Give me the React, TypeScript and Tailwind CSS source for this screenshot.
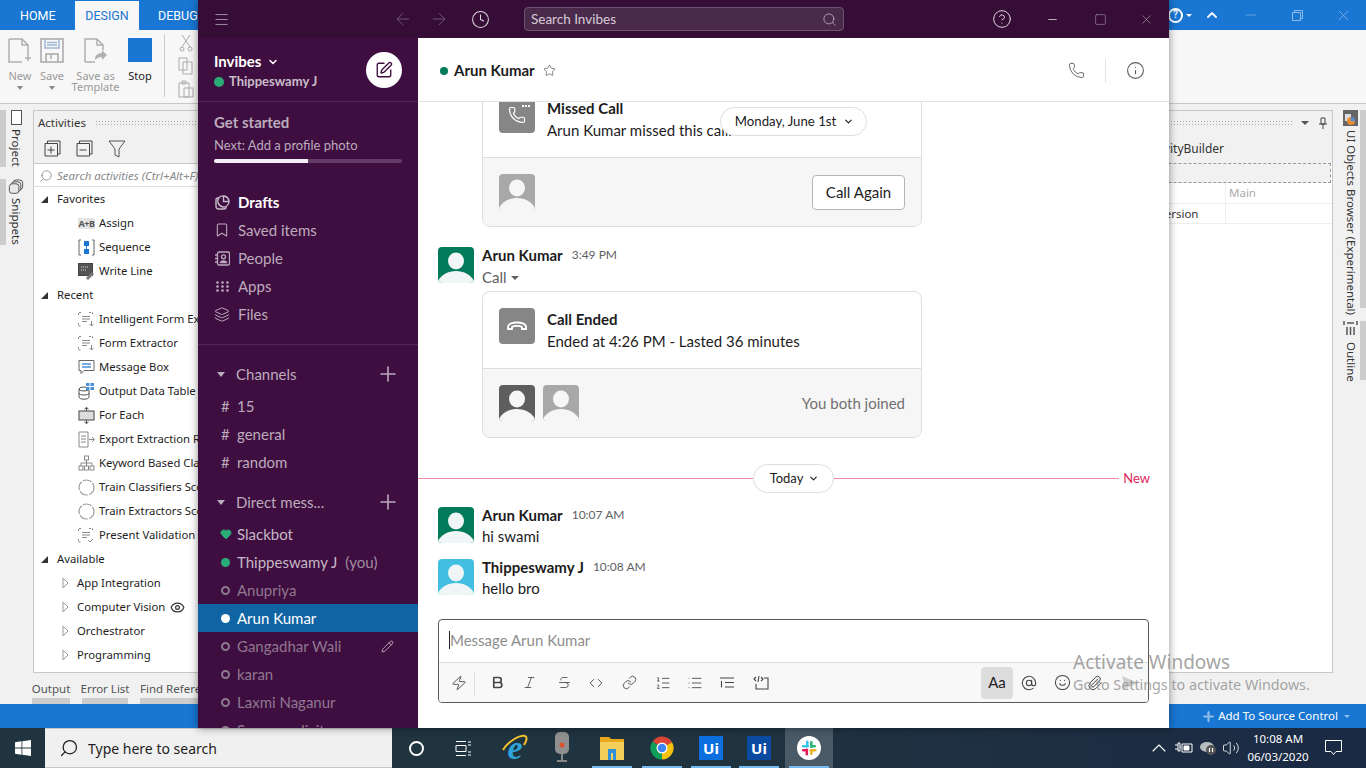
import React from "react";
import { Menu, ArrowLeft, ArrowRight, Clock, Search, CircleHelp, Minus, Square, X, Star, Phone, Info, ChevronDown, Plus, Heart, Pencil, SquarePen, Bookmark, Layers, Bold, Italic, Strikethrough, Code, Link, ListOrdered, List, AtSign, Smile, Paperclip, Zap, Eye, ChevronUp, Volume2 } from "lucide-react";

const Avatar = ({ bg, fg, cls = "" }: { bg: string; fg: string; cls?: string }) => (
  <svg width="36" height="36" viewBox="0 0 36 36" className={"shrink-0 rounded " + cls}>
    <rect width="36" height="36" fill={bg} />
    <ellipse cx="18" cy="14" rx="8" ry="8.5" fill={fg} />
    <path d="M0 36v-2C3 28 10 24 18 24s15 4 18 10v2z" fill={fg} />
  </svg>
);

const Tri = () => <span className="block w-0 h-0 border-l-[7px] border-l-transparent border-b-[7px] border-b-[#333]" />;
const OpenTri = () => (
  <svg width="7" height="12" viewBox="0 0 7 12"><path d="M1 1l5 5-5 5z" fill="#fff" stroke="#999" /></svg>
);

const G = "#8a8a8a";
const ExtractIcon = ({ check }: { check?: boolean }) => (
  <svg width="17" height="17" viewBox="0 0 17 17" fill="none" stroke={G}>
    <path d="M.5 4V1.5h3M11 1.5h3.5V4M.5 12v3h3" strokeDasharray="2 1" />
    <path d="M4 5.5h8M4 8h8M4 10.500h5" />
    {check ? <path d="M10 13l2 2 3-3" /> : <path d="M13.500 10v5M11.500 13l2 2 2-2" />}
  </svg>
);
const TreeIcons: Record<string, React.ReactNode> = {
  assign: <span className="text-[9px] font-bold text-[#555] bg-[#e4e4e4] px-px leading-[11px] tracking-[-0.5px]">A+B</span>,
  seq: (
    <svg width="17" height="17" viewBox="0 0 17 17" fill="none">
      <path d="M3 1H1v15h2M14 1h2v15h-2" stroke="#666" />
      <rect x="6" y="2" width="5" height="5" fill="#1976d2" /><rect x="6" y="10" width="5" height="5" fill="#1976d2" />
      <path d="M8.500 7v3" stroke="#1976d2" />
    </svg>
  ),
  write: (
    <svg width="17" height="17" viewBox="0 0 17 17" fill="none">
      <rect x=".5" y=".5" width="14" height="12" fill="#555" stroke="#444" />
      <path d="M3 4h8M3 7h6" stroke="#ddd" strokeDasharray="1 1" />
      <path d="M8 15l6-6 2 2-6 6z" fill="#777" />
    </svg>
  ),
  extract: <ExtractIcon />,
  present: <ExtractIcon check />,
  msg: (
    <svg width="17" height="17" viewBox="0 0 17 17" fill="none">
      <path d="M1 1.500h15v10H6l-3 3v-3H1z" stroke="#666" />
      <path d="M4 5h9M4 8h9" stroke="#4a90d9" strokeWidth="1.500" />
    </svg>
  ),
  table: (
    <svg width="17" height="17" viewBox="0 0 17 17" fill="none">
      <ellipse cx="6" cy="6" rx="5" ry="2" stroke="#555" />
      <path d="M1 6v8c0 1.300 2 2.200 5 2.200s5-.9 5-2.200V6M1 10c0 1.300 2 2 5 2s5-.7 5-2" stroke="#555" />
      <rect x="8" y="0" width="8" height="7" fill="#4a90d9" />
      <path d="M8 3.500h8M12 0v7" stroke="#fff" />
    </svg>
  ),
  foreach: (
    <svg width="17" height="17" viewBox="0 0 17 17" fill="none">
      <rect x="1" y="4" width="15" height="9" fill="#ddd" stroke="#444" />
      <path d="M8.500 1v3M8.500 13v3M6.500 2l2-1.500 2 1.500M6.500 15l2 1.500 2-1.500" stroke="#444" />
    </svg>
  ),
  exportx: (
    <svg width="17" height="17" viewBox="0 0 17 17" fill="none" stroke={G}>
      <path d="M1 1h9v15H1zM3 5h5M3 8h5M3 11h5" />
      <path d="M11 8.500h5M14 6l2.500 2.500L14 11" />
    </svg>
  ),
  keyword: (
    <svg width="17" height="17" viewBox="0 0 17 17" fill="none" stroke={G}>
      <rect x="6.500" y="1" width="4" height="4" /><rect x="1" y="11" width="4" height="4" /><rect x="6.500" y="11" width="4" height="4" /><rect x="12" y="11" width="4" height="4" />
      <path d="M8.500 5v6M3 11V8h11v3" />
    </svg>
  ),
  train: (
    <svg width="17" height="17" viewBox="0 0 17 17" fill="none"><circle cx="8.500" cy="8.500" r="7.500" stroke="#999" strokeWidth="1.200" strokeDasharray="9 1.500" /></svg>
  ),
};

const treeFont = "[font-family:'Noto_Sans',sans-serif] text-[11.3px] text-[#1e1e1e]";

const Cat = ({ label }: { label: string }) => (
  <div className="h-6 flex items-center">
    <span className="w-[23px] pl-[7px] flex"><Tri /></span>
    <span>{label}</span>
  </div>
);
const Item = ({ icon, label }: { icon: string; label: string }) => (
  <div className="h-6 flex items-center whitespace-nowrap">
    <span className="w-[17px] h-[17px] ml-[44px] mr-[4px] flex items-center justify-center shrink-0">{TreeIcons[icon]}</span>
    <span>{label}</span>
  </div>
);
const Group = ({ label, eye }: { label: string; eye?: boolean }) => (
  <div className="h-6 flex items-center whitespace-nowrap">
    <span className="ml-[28px] w-[15px] flex shrink-0"><OpenTri /></span>
    <span>{label}</span>
    {eye && <Eye size={15} className="ml-[5px] text-[#333]" />}
  </div>
);

const NavRow = ({ icon, label, active }: { icon: React.ReactNode; label: string; active?: boolean }) => (
  <div className="h-7 flex items-center pl-4">
    <span className={"w-[16px] mr-[8px] flex justify-center " + (active ? "text-[#c9bcca]" : "text-[#bcabbc]")}>{icon}</span>
    <span className={active ? "font-bold text-white" : "text-[#bcabbc]"}>{label}</span>
  </div>
);

const Hash = ({ label }: { label: string }) => (
  <div className="h-7 flex items-center pl-[23px] text-[#bcabbc]">
    <span className="w-[16px]">#</span><span>{label}</span>
  </div>
);
const OffDot = () => <span className="w-[9px] h-[9px] rounded-full border-2 border-[#8d7a8e] ml-[23px] mr-[7px]" />;
const Dm = ({ label, children }: { label: string; children?: React.ReactNode }) => (
  <div className="h-7 flex items-center text-[#8f7790]">
    <OffDot /><span>{label}</span>{children}
  </div>
);

const SectionHead = ({ label }: { label: string }) => (
  <div className="h-7 flex items-center text-[#bcabbc] pl-[19px] pr-[18px]">
    <span className="w-0 h-0 border-x-[4.500px] border-x-transparent border-t-[5px] border-t-[#bcabbc] mr-[11px]" />
    <span className="flex-1">{label}</span>
    <Plus size={24} strokeWidth={1.600} />
  </div>
);

const CallCard = ({ icon, title, sub, footer, avatars }: { icon: React.ReactNode; title: string; sub: string; footer: React.ReactNode; avatars: React.ReactNode }) => (
  <div className="w-[440px] h-[147px] border border-[#dddddd] rounded-lg flex flex-col overflow-hidden">
    <div className="h-[77px] shrink-0 pl-4 pt-4 flex gap-3 border-b border-[#dddddd]">
      <div className="w-9 h-9 rounded bg-[#868686] flex items-center justify-center text-white shrink-0">{icon}</div>
      <div>
        <div className="h-[22px] leading-[22px] font-bold text-[15px] text-[#1d1c1d]">{title}</div>
        <div className="h-[22px] leading-[22px] text-[15px] text-[#1d1c1d]">{sub}</div>
      </div>
    </div>
    <div className="flex-1 bg-[#f6f6f6] flex items-center justify-between pl-4 pr-4">
      <div className="flex gap-2">{avatars}</div>
      {footer}
    </div>
  </div>
);

const NameLine = ({ name, time }: { name: string; time: string }) => (
  <div className="h-[16px] mb-[2px] flex items-center gap-[9px]">
    <span className="font-bold text-[15px] text-[#1d1c1d]">{name}</span>
    <span className="text-[12px] text-[#616061]">{time}</span>
  </div>
);

const Msg = ({ bg, name, time, text, cls = "" }: { bg: string; name: string; time: string; text: React.ReactNode; cls?: string }) => (
  <div className={"flex gap-2 pl-5 " + cls}>
    <Avatar bg={bg} fg="#eff6f5" />
    <div>
      <NameLine name={name} time={time} />
      <div className="h-[22px] leading-[22px] text-[15px] text-[#1d1c1d]">{text}</div>
    </div>
  </div>
);

const Tb = ({ children, cls = "" }: { children: React.ReactNode; cls?: string }) => (
  <span className={"flex items-center justify-center text-[#444] " + cls}>{children}</span>
);

const Underline = () => <span className="absolute bottom-0 left-1/2 -translate-x-1/2 w-[40px] h-[2px] bg-[#76b9ed]" />;

const SlackLogo = () => (
  <svg width="24" height="24" viewBox="0 0 24 24">
    <circle cx="12" cy="12" r="12" fill="#fff" />
    <rect x="5" y="9" width="7" height="2.600" rx="1.300" fill="#36c5f0" />
    <rect x="9" y="4.500" width="2.600" height="6" rx="1.300" fill="#36c5f0" />
    <rect x="13" y="5" width="2.600" height="7" rx="1.300" fill="#2eb67d" />
    <rect x="13" y="9" width="6" height="2.600" rx="1.300" fill="#2eb67d" />
    <rect x="12.500" y="13" width="7" height="2.600" rx="1.300" fill="#ecb22e" />
    <rect x="13" y="13" width="2.600" height="6" rx="1.300" fill="#ecb22e" />
    <rect x="8.500" y="12.500" width="2.600" height="7" rx="1.300" fill="#e01e5a" />
    <rect x="5" y="13" width="6" height="2.600" rx="1.300" fill="#e01e5a" />
  </svg>
);

export default function App() {
  return (
    <div className="w-[1366px] h-[768px] relative overflow-hidden flex flex-col bg-[#f1f1f1] [font-family:'Noto_Sans',sans-serif]">
      {/* ---------- UiPath Studio behind ---------- */}
      <div className="h-[30px] bg-[#1976d2] flex text-[12.500px] text-white shrink-0 items-end [font-family:Roboto,sans-serif]">
        <span className="w-[75px] h-[30px] pt-[7px] pl-[20px]">HOME</span>
        <span className="w-[64px] h-[29px] bg-[#f7f7f7] text-[#1976d2] pt-[6px] text-center">DESIGN</span>
        <span className="w-[60px] h-[30px] pt-[7px] pl-[19px]">DEBUG</span>
        <span className="flex-1" />
        <span className="flex items-center h-[30px] w-[198px] text-white/90">
          <span className="w-[15px] h-[15px] shrink-0 rounded-full border-2 border-white text-[10px] font-bold flex items-center justify-center leading-none">?</span>
          <span className="ml-[3px] w-0 h-0 border-x-[3px] border-x-transparent border-t-[3px] border-t-white" />
          <ChevronUp size={16} strokeWidth={3} className="ml-[12px]" />
          <Minus size={16} strokeWidth={1} className="ml-[23px] text-[#8fbde9]" />
          <span className="w-[16px] h-[16px] ml-[30px] flex items-center justify-center">
            <svg width="11" height="11" viewBox="0 0 11 11" fill="none" stroke="#8fbde9"><path d="M.5 2.500h8v8h-8zM2.500 2.500v-2h8v8h-2" /></svg>
          </span>
          <X size={17} strokeWidth={1} className="ml-[30px] text-[#8fbde9]" />
        </span>
      </div>
      <div className="h-[74px] shrink-0 bg-[#f7f7f7] border-b border-[#c8c8c8] flex text-[11px] text-[#9a9a9a] leading-[11px]">
        <div className="w-[40px] pt-[8px] flex flex-col items-center">
          <svg width="24" height="25" viewBox="0 0 24 25" fill="none" stroke="#b0b0b0" strokeWidth="1.500"><path d="M1 1h13l6 6v10M20 17M1 1v23h13M14 1v6h6" /><path d="M17 20h6M20 17v6" /></svg>
          <span className="mt-[7px]">New</span>
          <span className="mt-[5px] w-0 h-0 border-x-[3.500px] border-x-transparent border-t-[4px] border-t-[#888]" />
        </div>
        <div className="w-[24px] pt-[8px] flex flex-col items-center">
          <svg width="24" height="25" viewBox="0 0 24 25" fill="none" stroke="#a8a8a8" strokeWidth="1.500"><path d="M1 1h22v23H1z" /><path d="M5 1v9h14V1M7 4.500h10M7 7h10" stroke="#a0b8d8" /><path d="M6 24v-8h12v8M11 17v4" /></svg>
          <span className="mt-[7px]">Save</span>
          <span className="mt-[5px] w-0 h-0 border-x-[3.500px] border-x-transparent border-t-[4px] border-t-[#888]" />
        </div>
        <div className="w-[57px] pt-[8px] flex flex-col items-center ml-[3px]">
          <svg width="24" height="25" viewBox="0 0 24 25" fill="none" stroke="#b0b0b0" strokeWidth="1.500"><path d="M1 24V1h12l6 6v5M1 24h10M13 1v6h6" /><path d="M11 22c0-5 3-7 7-7v-3l5 5-5 5v-3c-3 0-5 1-7 3z" fill="#b0b0b0" stroke="none" /></svg>
          <span className="mt-[7px]">Save as</span>
          <span>Template</span>
        </div>
        <div className="w-[24px] pt-[8px] flex flex-col items-center ml-[4px]">
          <span className="w-[24px] h-[24px] bg-[#1976d2]" />
          <span className="mt-[8px] text-[#222]">Stop</span>
        </div>
        <span className="w-px h-[63px] bg-[#ccc] mt-[4px] ml-[12px]" />
        <div className="flex flex-col pt-[4px] pl-[13px] gap-[5px]">
          <svg width="16" height="18" viewBox="0 0 16 18" fill="none" stroke="#aaa"><path d="M4 1l8 12M12 1L4 13" /><circle cx="4" cy="15" r="2" /><circle cx="12" cy="15" r="2" /></svg>
          <svg width="16" height="18" viewBox="0 0 16 18" fill="none" stroke="#aaa"><path d="M1 1h8v12H1zM5 5h9v12H5z" fill="#f7f7f7" /></svg>
          <svg width="16" height="18" viewBox="0 0 16 18" fill="none" stroke="#aaa"><path d="M1 3h10v14H1zM4 1h4v3H4zM6 8h9v9H6z" fill="#f7f7f7" /></svg>
        </div>
      </div>

      <div className="flex-1 flex min-h-0">
        {/* left strip */}
        <div className="w-[33px] shrink-0 flex flex-col pt-[6px] text-[11.500px] text-[#333]">
          <div className="flex h-[57px]">
            <span className="w-[6px] bg-[#cccccc]" />
            <div className="flex flex-col items-center w-[20px]">
              <span className="w-[11px] h-[15px] border border-[#555] bg-white" />
              <span className="[writing-mode:vertical-rl] mt-[4px] leading-[14px]">Project</span>
            </div>
          </div>
          <div className="flex h-[66px] mt-[12px]">
            <span className="w-[6px] bg-[#cccccc]" />
            <div className="flex flex-col items-center w-[20px]">
              <svg width="16" height="16" viewBox="0 0 16 16" fill="#e8e8e8" stroke="#555"><rect x="5" y="1" width="10" height="10" rx="3" /><rect x="3" y="3" width="10" height="10" rx="3" /><rect x="1" y="5" width="10" height="10" rx="3" /></svg>
              <span className="[writing-mode:vertical-rl] mt-[4px] leading-[14px]">Snippets</span>
            </div>
          </div>
        </div>

        {/* activities */}
        <div className="shrink-0 w-[300px] flex flex-col">
          <div className="mt-[6px] h-[563px] bg-white border border-[#c8c8c8] flex flex-col overflow-hidden">
            <div className="h-[23px] bg-[#f1f1f1] flex items-center pl-[4px] text-[11.500px] text-[#333] shrink-0">
              Activities
              <span className="ml-[9px] flex-1 h-[5px] mr-[6px] bg-[radial-gradient(#aaa_1px,transparent_1px)] [background-size:3px_3px]" />
            </div>
            <div className="h-[30px] bg-[#f1f1f1] border-b border-[#c8c8c8] flex items-center pl-[10px] shrink-0">
              <svg width="17" height="17" viewBox="0 0 17 17" fill="none" stroke="#444"><path d="M3.500 3V1H16v13h-2" /><path d="M1 3.500h12.500V16H1zM7 6.500v7M3.500 10h7" /></svg>
              <svg width="17" height="17" viewBox="0 0 17 17" fill="none" stroke="#444" className="ml-[15px]"><path d="M3.500 3V1H16v13h-2" /><path d="M1 3.500h12.500V16H1zM3.500 10h7" /></svg>
              <svg width="18" height="18" viewBox="0 0 18 18" fill="none" stroke="#555" className="ml-[15px]"><path d="M1 1h16l-6 8v8l-4-2V9z" /></svg>
            </div>
            <div className="h-[23px] border-b border-[#dedede] flex items-center pl-[5px] pt-[2px] shrink-0 text-[11.500px] italic text-[#8a8a8a] whitespace-nowrap">
              <Search size={14} strokeWidth={1.500} className="mr-[4px] -scale-x-100" />
              Search activities (Ctrl+Alt+F)
            </div>
            <div className={treeFont}>
              <Cat label="Favorites" />
              <Item icon="assign" label="Assign" />
              <Item icon="seq" label="Sequence" />
              <Item icon="write" label="Write Line" />
              <Cat label="Recent" />
              <Item icon="extract" label="Intelligent Form Extractor" />
              <Item icon="extract" label="Form Extractor" />
              <Item icon="msg" label="Message Box" />
              <Item icon="table" label="Output Data Table" />
              <Item icon="foreach" label="For Each" />
              <Item icon="exportx" label="Export Extraction Results" />
              <Item icon="keyword" label="Keyword Based Classifier" />
              <Item icon="train" label="Train Classifiers Scope" />
              <Item icon="train" label="Train Extractors Scope" />
              <Item icon="present" label="Present Validation Station" />
              <Cat label="Available" />
              <Group label="App Integration" />
              <Group label="Computer Vision" eye />
              <Group label="Orchestrator" />
              <Group label="Programming" />
            </div>
          </div>
          <div className="flex-1 flex text-[11.500px] text-[#555] whitespace-nowrap">
            <div className="w-[38px] flex flex-col justify-between items-center pt-[7px] -ml-px"><span>Output</span><span className="w-full h-[6px] bg-[#cccccc]" /></div>
            <div className="w-[46px] ml-[12px] flex flex-col justify-between items-center pt-[7px]"><span>Error List</span><span className="w-full h-[6px] bg-[#cccccc]" /></div>
            <div className="w-[100px] ml-[12px] flex flex-col justify-between pt-[7px]"><span>Find References</span><span className="w-full h-[6px] bg-[#cccccc]" /></div>
          </div>
        </div>

        <div className="flex-1" />

        {/* right panel */}
        <div className="w-[300px] shrink-0 mt-[6px] h-[563px] bg-white border border-[#c8c8c8] flex flex-col text-[11.500px] text-[#333]">
          <div className="h-[23px] bg-[#f1f1f1] flex items-center shrink-0 justify-end pr-[5px]">
            <span className="flex-1 ml-[10px] h-[5px] mr-[8px] bg-[radial-gradient(#aaa_1px,transparent_1px)] [background-size:3px_3px]" />
            <span className="w-0 h-0 border-x-[4px] border-x-transparent border-t-[4px] border-t-[#555] mr-[10px]" />
            <svg width="8" height="12" viewBox="0 0 8 12" fill="none" stroke="#444"><path d="M2 1h4v6H2zM0 7h8M4 7v5" /></svg>
          </div>
          <div className="h-[29px] bg-[#f1f1f1] flex items-center pl-[109px] shrink-0 text-[12px]">ActivityBuilder</div>
          <div className="h-[20px] bg-[#f1f1f1] border border-dashed border-[#999] mr-px shrink-0" />
          <div className="h-[21px] flex border-b border-[#eee] shrink-0">
            <span className="w-[192px] border-r border-[#eee]" /><span className="pl-[3px] text-[#aaa] leading-[20px]">Main</span>
          </div>
          <div className="h-[20px] flex border-b border-[#eee] shrink-0">
            <span className="w-[192px] border-r border-[#eee] pl-[124px] leading-[20px]">Version</span>
          </div>
        </div>

        {/* right strip */}
        <div className="w-[33px] shrink-0 flex flex-col pt-[6px] text-[11.500px] text-[#333]">
          <div className="flex h-[198px]">
            <div className="flex flex-col items-center w-[27px] pl-[8px]">
              <svg width="15" height="16" viewBox="0 0 15 16" className="shrink-0"><rect width="15" height="16" fill="#666" /><rect x="2" y="4" width="6" height="7" fill="#ddd" /><circle cx="8" cy="11" r="4" fill="#e58b3a" /><path d="M8 11V7a4 4 0 014 4z" fill="#4a90d9" /></svg>
              <span className="[writing-mode:vertical-rl] mt-[4px] leading-[14px] whitespace-nowrap">UI Objects Browser (Experimental)</span>
            </div>
            <span className="w-[6px] bg-[#cccccc]" />
          </div>
          <div className="flex h-[59px] mt-[13px]">
            <div className="flex flex-col items-center w-[27px] pl-[8px]">
              <svg width="15" height="14" viewBox="0 0 15 14" fill="none" stroke="#555" strokeWidth="1.500" className="shrink-0"><path d="M1 0v4M14 0v4M4 2h7M4 6v8M7.500 6v8M11 6v8" /></svg>
              <span className="[writing-mode:vertical-rl] mt-[7px] leading-[14px]">Outline</span>
            </div>
            <span className="w-[6px] bg-[#cccccc]" />
          </div>
        </div>
      </div>

      <div className="h-[24px] shrink-0 bg-[#1976d2] flex items-center justify-end text-[11.500px] text-white pr-[16px]">
        <Plus size={15} strokeWidth={3.500} className="text-[#8fbde9] mr-[2px]" />
        Add To Source Control
        <span className="ml-[6px] w-0 h-0 border-x-[3px] border-x-transparent border-t-[3px] border-t-[#8fbde9]" />
      </div>

      {/* ---------- Taskbar ---------- */}
      <div className="h-[40px] shrink-0 bg-[linear-gradient(90deg,#20343f,#20343f_50%,#1a2a45)] flex items-center text-white relative">
        <span className="w-[45px] flex justify-center">
          <svg width="16" height="16" viewBox="0 0 16 16" fill="#fff"><path d="M0 2.200l6.500-.9v6.300H0zM7.300 1.200L16 0v7.600H7.300zM0 8.400h6.500v6.300L0 13.800zM7.300 8.400H16V16l-8.700-1.200z" /></svg>
        </span>
        <div className="w-[347px] h-[40px] bg-[#f0f0f0] border-y border-[#c8c8c8] flex items-center pl-[14px] text-[#1e1e1e] text-[14px]">
          <Search size={20} strokeWidth={1.500} className="-scale-x-100 mr-[9px]" />
          Type here to search
        </div>
        <span className="w-[48px] flex justify-center"><span className="w-[15px] h-[15px] rounded-full border-2 border-white" /></span>
        <span className="w-[46px] flex justify-center">
          <svg width="17" height="17" viewBox="0 0 17 17" fill="none" stroke="#fff"><path d="M1 5.500h10v6H1zM1 1.500h10M1 15.500h10M13 2h3M13 5h3M13 12h3M13 15h3" /></svg>
        </span>
        <span className="w-[58px] flex justify-center relative">
          <span className="text-[34px] leading-[34px] italic font-bold text-[#2ea3dc] [font-family:'Liberation_Serif',serif]">e</span>
          <svg width="30" height="24" viewBox="0 0 30 24" fill="none" className="absolute top-[3px] left-[14px]"><path d="M3 16C8 7 20 1 25 2c3 1 1 6-1 9" stroke="#f2c230" strokeWidth="2" /></svg>
        </span>
        <span className="w-[36px] flex justify-center">
          <svg width="14" height="32" viewBox="0 0 14 32"><rect width="14" height="22" rx="5" fill="#8f8f8f" /><circle cx="7" cy="13" r="2.500" fill="#d9552a" /><path d="M6 22h2v6h4v2H2v-2h4z" fill="#888" /></svg>
        </span>
        <span className="w-[64px] h-[40px] flex items-center justify-center relative">
          <svg width="24" height="26" viewBox="0 0 24 26"><path d="M0 2h9l2 2h13v4H0z" fill="#e8a81c" /><path d="M0 7h24v18H0z" fill="#f5cf5c" /><path d="M8 14h8v11H8z" fill="#2f8fd8" /><path d="M11 18h2v7h-2z" fill="#f5cf5c" /></svg>
          <Underline />
        </span>
        <span className="w-[36px] h-[40px] flex items-center justify-center relative">
          <svg width="24" height="24" viewBox="0 0 24 24" className="shrink-0">
            <path d="M12 12L2.500 5.600A11.500 11.500 0 0122 6.200z" fill="#db4437" />
            <path d="M12 12l10-5.800A11.500 11.500 0 0112 23.500z" fill="#f4c20d" />
            <path d="M12 12v11.500A11.500 11.500 0 012.500 5.600z" fill="#0f9d58" />
            <circle cx="12" cy="12" r="5.500" fill="#fff" /><circle cx="12" cy="12" r="4.300" fill="#4285f4" />
          </svg>
          <Underline />
        </span>
        <span className="w-[62px] h-[40px] flex items-center justify-center relative">
          <span className="w-[24px] h-[24px] bg-[#0b6fe0] flex items-center justify-center text-[15px] font-bold">Ui</span>
          <Underline />
        </span>
        <span className="w-[34px] h-[40px] flex items-center justify-center relative">
          <span className="w-[24px] h-[24px] bg-[#0a4aa0] flex items-center justify-center text-[15px] font-bold">Ui</span>
          <Underline />
        </span>
        <span className="w-[48px] h-[40px] ml-[9px] flex items-center justify-center relative bg-[#4a5a66]">
          <SlackLogo />
          <Underline />
        </span>
        <span className="flex-1" />
        <ChevronUp size={24} strokeWidth={1.100} className="mr-[4px]" />
        <svg width="18" height="12" viewBox="0 0 18 12" fill="none" stroke="#fff" className="mr-[6px]"><path d="M0 3h3M0 7h3M3 1v8h2V1zM5 5h1M7 2h10v8H7z" /><path d="M9 4h5v4H9z" fill="#fff" /></svg>
        <svg width="18" height="14" viewBox="0 0 18 14" className="mr-[5px]"><ellipse cx="8" cy="6" rx="7" ry="5" fill="#b8bcc0" /><circle cx="12" cy="9" r="5" fill="#555" /><path d="M10.500 7v4M13.500 7v4" stroke="#fff" strokeWidth="1.200" /></svg>
        <Volume2 size={18} strokeWidth={1.100} className="mr-[13px]" />
        <span className="w-[50px] flex flex-col items-center text-[11.500px] leading-[18px] whitespace-nowrap">
          <span>10:08 AM</span><span>06/03/2020</span>
        </span>
        <svg width="17" height="16" viewBox="0 0 17 16" fill="none" stroke="#fff" className="ml-[22px] mr-[24px]"><path d="M.5.500h16v11H11l-2.500 3-2.500-3H.5z" /></svg>
      </div>

      {/* ---------- Slack window on the desktop ---------- */}
      <div className="absolute left-[198px] top-0 w-[971px] h-[728px] flex flex-col bg-white shadow-[0_0_8px_rgba(0,0,0,0.45)] [font-family:Lato,sans-serif]">
        <div className="h-[38px] shrink-0 bg-[#350d36] flex items-center text-[#d3c6d3]">
          <Menu size={17} strokeWidth={1} className="ml-[15px] text-[#cbbccb]" />
          <ArrowLeft size={20} strokeWidth={1} className="ml-[163px] text-[#7a5f7b]" />
          <ArrowRight size={20} strokeWidth={1} className="ml-[16px] text-[#7a5f7b]" />
          <Clock size={19} strokeWidth={1.300} className="ml-[22px] text-[#e0d6e0]" />
          <div className="ml-[34px] w-[320px] h-[24px] rounded bg-[#4a2a4b] border border-[#6d5270] flex items-center px-[6px] text-[13.500px] text-[#d6cbd6]">
            <span className="flex-1">Search Invibes</span>
            <Search size={15} strokeWidth={1.100} />
          </div>
          <CircleHelp size={20} strokeWidth={1.200} className="ml-[148px] text-[#e0d6e0]" />
          <Minus size={13} strokeWidth={1.500} className="ml-[34px] text-[#e0d6e0]" />
          <Square size={13} strokeWidth={1} className="ml-[35px] text-[#b5a6b6]" />
          <X size={15} strokeWidth={1} className="ml-[32px] text-[#b5a6b6]" />
        </div>
        <div className="flex-1 flex min-h-0">
          {/* sidebar */}
          <div className="w-[220px] shrink-0 bg-[#3f0e40] text-[15px] overflow-hidden">
            <div className="h-[64px] border-b border-[#522653] flex items-center pl-4 pr-4">
              <div className="flex-1 pt-[4px]">
                <div className="h-[20px] flex items-center font-bold text-white text-[15px] leading-none">
                  Invibes<ChevronDown size={12} strokeWidth={3} className="ml-[6px]" />
                </div>
                <div className="h-[20px] flex items-center text-[#c9bcca] text-[13px] font-bold">
                  <span className="w-[10px] h-[10px] rounded-full bg-[#2bac76] mr-[5px]" />Thippeswamy J
                </div>
              </div>
              <span className="w-9 h-9 rounded-full bg-white flex items-center justify-center text-[#3f0e40]"><SquarePen size={18} strokeWidth={1.800} /></span>
            </div>
            <div className="pl-4 pr-4 pt-[11px] h-[72px]">
              <div className="font-bold text-[#bcabbc] h-[19px] leading-[19px]">Get started</div>
              <div className="text-[#bcabbc] text-[13px] mt-[4px] h-[18px] leading-[18px]">Next: Add a profile photo</div>
              <div className="h-1 rounded bg-[#653c67] mt-[5px]"><div className="w-1/2 h-1 rounded-l bg-[#f3eef3]" /></div>
            </div>
            <div className="pt-[14px] pb-[16px] border-b border-[#522653]">
              <NavRow active label="Drafts" icon={<svg width="15" height="16" viewBox="0 0 15 16" fill="none" stroke="currentColor" strokeWidth="1.400"><path d="M4 3.500A6 6 0 0114 7v1a6 6 0 01-6 5 6 6 0 01-4-9.500zM8.500 2.500V7.500H14" /><path d="M3 4H2.500A1.500 1.500 0 001 5.500v7A2.500 2.500 0 003.500 15H9a2 2 0 002-2" /></svg>} />
              <NavRow label="Saved items" icon={<Bookmark size={18} strokeWidth={1.600} />} />
              <NavRow label="People" icon={<svg width="15" height="15" viewBox="0 0 15 15" fill="none" stroke="currentColor" strokeWidth="1.300"><rect x="2.500" y="1" width="12" height="13" rx="1.500" /><circle cx="8.500" cy="5.800" r="2" /><path d="M5.500 11.500c.5-2 5.500-2 6 0zM0 4h2.500M0 7.500h2.500M0 11h2.500" /></svg>} />
              <NavRow label="Apps" icon={<svg width="13" height="11" viewBox="0 0 13 11" fill="currentColor">{[1.500, 6.500, 11.500].flatMap((x) => [1.500, 5.500, 9.500].map((y) => <circle key={`${x}-${y}`} cx={x} cy={y} r="1.300" />))}</svg>} />
              <NavRow label="Files" icon={<Layers size={17} strokeWidth={1.500} />} />
            </div>
            <div className="pt-[15px]">
              <SectionHead label="Channels" />
              <div className="mt-[4px]"><Hash label="15" /><Hash label="general" /><Hash label="random" /></div>
              <div className="mt-[12px]"><SectionHead label="Direct mess..." /></div>
              <div className="mt-[4px]">
                <div className="h-7 flex items-center text-[#c5b7c6]"><Heart size={12} fill="#2bac76" stroke="#2bac76" className="ml-[22px] mr-[5px]" />Slackbot</div>
                <div className="h-7 flex items-center text-[#c5b7c6]"><span className="w-[9px] h-[9px] rounded-full bg-[#2bac76] ml-[23px] mr-[7px]" />Thippeswamy J<span className="ml-[8px] text-[#a08da1]">(you)</span></div>
                <Dm label="Anupriya" />
                <div className="h-7 flex items-center text-white bg-[#1164a3]"><span className="w-[9px] h-[9px] rounded-full bg-white ml-[23px] mr-[7px]" />Arun Kumar</div>
                <Dm label="Gangadhar Wali"><Pencil size={13} strokeWidth={1.500} className="ml-auto mr-[24px] text-[#cfc3cf]" /></Dm>
                <Dm label="karan" />
                <Dm label="Laxmi Naganur" />
                <Dm label="Sowmya dixit" />
              </div>
            </div>
          </div>

          {/* conversation */}
          <div className="flex-1 min-w-0 flex flex-col">
            <div className="h-[64px] shrink-0 border-b border-[#e2e2e2] flex items-center pl-[22px] pr-[24px] pt-[2px]">
              <span className="w-2 h-2 rounded-full bg-[#007a5a] mr-[6px]" />
              <span className="font-bold text-[15px] text-[#1d1c1d]">Arun Kumar</span>
              <Star size={13} strokeWidth={1.300} className="ml-[8px] text-[#555]" />
              <span className="flex-1" />
              <Phone size={17} strokeWidth={1.300} className="text-[#616061]" />
              <span className="w-px h-[24px] bg-[#e2e2e2] mx-[20px]" />
              <Info size={19} strokeWidth={1.400} className="text-[#616061]" />
            </div>
            <div className="flex-1 min-h-0 relative overflow-hidden">
              <div className="-mt-[22px] pl-[64px]">
                <CallCard
                  title="Missed Call"
                  sub="Arun Kumar missed this call."
                  icon={<span className="relative flex"><Phone size={18} strokeWidth={1.600} /><span className="absolute -top-[1px] -right-[4px] w-[8px] border-t-2 border-dotted border-white" /></span>}
                  avatars={<Avatar bg="#a8a8a8" fg="#f6f6f6" />}
                  footer={<span className="w-[93px] h-[35px] rounded border border-[#b5b5b5] bg-white flex items-center justify-center text-[15px] text-[#1d1c1d]">Call Again</span>}
                />
              </div>
              <div className="flex gap-2 pl-5 mt-[20px]">
                <Avatar bg="#007a5a" fg="#eff6f5" />
                <div>
                  <NameLine name="Arun Kumar" time="3:49 PM" />
                  <div className="h-[22px] leading-[22px] pt-[2px] text-[15px] text-[#616061] flex items-center">
                    Call<span className="ml-[4px] mt-[2px] w-0 h-0 border-x-[4px] border-x-transparent border-t-[4px] border-t-[#616061]" />
                  </div>
                  <div className="mt-[4px]">
                    <CallCard
                      title="Call Ended"
                      sub="Ended at 4:26 PM - Lasted 36 minutes"
                      icon={<svg width="20" height="10" viewBox="0 0 20 10" fill="none" stroke="#fff" strokeWidth="1.800"><path d="M1 6c0-6 18-6 18 0v2h-4V6c-2-1.500-8-1.500-10 0v2H1z" /></svg>}
                      avatars={<><Avatar bg="#5e5e5e" fg="#f6f6f6" /><Avatar bg="#a8a8a8" fg="#f6f6f6" /></>}
                      footer={<span className="text-[15px] text-[#717071]">You both joined</span>}
                    />
                  </div>
                </div>
              </div>
              <div className="mt-[26px] h-[29px] flex items-center pr-[19px]">
                <span className="h-px w-[335px] bg-[#ee88ac]" />
                <span className="w-[81px] h-[29px] rounded-full border border-[#dddddd] bg-white flex items-center justify-center text-[13px] text-[#1d1c1d] pl-[2px]">
                  Today<ChevronDown size={11} strokeWidth={2.500} className="ml-[5px]" />
                </span>
                <span className="h-px flex-1 bg-[#ee88ac]" />
                <span className="ml-[4px] text-[13px] text-[#e01e5a]">New</span>
              </div>
              <Msg cls="mt-[14px]" bg="#007a5a" name="Arun Kumar" time="10:07 AM" text="hi swami" />
              <Msg cls="mt-[12px]" bg="#42bfe0" name="Thippeswamy J" time="10:08 AM" text="hello bro" />
              <span className="absolute left-[302px] top-[5px] w-[147px] h-[29px] rounded-full border border-[#dddddd] bg-white flex items-center justify-center text-[13.200px] text-[#1d1c1d] pl-[2px]">
                Monday, June 1st<ChevronDown size={11} strokeWidth={2.500} className="ml-[7px]" />
              </span>
            </div>
            <div className="shrink-0 mx-5 mb-[25px] h-[84px] border border-[#5a5a5a] rounded flex flex-col overflow-hidden">
              <div className="h-[43px] shrink-0 border-b border-[#dddddd] flex items-center pl-[10px] pb-[2px] text-[15px] text-[#8e8e8e]">
                <span className="w-px h-[18px] bg-[#222]" />Message Arun Kumar
              </div>
              <div className="flex-1 bg-[#f8f8f8] flex items-center pl-[12px]">
                <Zap size={16} strokeWidth={1.300} className="text-[#444] -skew-x-6" />
                <span className="w-px h-[24px] bg-[#ddd] ml-[7px] mr-[12px]" />
                <Tb cls="w-[20px]"><Bold size={15} strokeWidth={2.600} /></Tb>
                <Tb cls="w-[20px] ml-[12px]"><Italic size={15} strokeWidth={1.300} /></Tb>
                <Tb cls="w-[20px] ml-[15px]"><Strikethrough size={15} strokeWidth={1.300} /></Tb>
                <Tb cls="w-[20px] ml-[12px]"><Code size={14} strokeWidth={1.600} /></Tb>
                <Tb cls="w-[20px] ml-[13px]"><Link size={15} strokeWidth={1.400} /></Tb>
                <Tb cls="w-[20px] ml-[14px]"><ListOrdered size={16} strokeWidth={1.300} /></Tb>
                <Tb cls="w-[20px] ml-[12px]"><List size={16} strokeWidth={1.300} /></Tb>
                <Tb cls="w-[20px] ml-[12px]"><svg width="14" height="11" viewBox="0 0 14 11" fill="none" stroke="currentColor" strokeWidth="1.100"><path d="M0 1h14M5 5.500h9M5 10h9M1.500 4v6.500" /></svg></Tb>
                <Tb cls="w-[20px] ml-[14px]"><svg width="16" height="15" viewBox="0 0 16 15" fill="none" stroke="currentColor" strokeWidth="1.100"><path d="M3 2L1 4l2 2M6 1L5 7M8 2l2 2-2 2M11 3h4v11H3v-5" /></svg></Tb>
                <span className="flex-1" />
                <span className="w-[32px] h-[32px] bg-[#dddddd] rounded-sm flex items-center justify-center text-[15px] text-[#222]">Aa</span>
                <Tb cls="w-[32px]"><AtSign size={16} strokeWidth={1.600} /></Tb>
                <Tb cls="w-[32px] ml-px"><Smile size={17} strokeWidth={1.500} /></Tb>
                <Tb cls="w-[32px] ml-px"><Paperclip size={16} strokeWidth={1.500} /></Tb>
                <span className="w-[37px] flex justify-center"><svg width="16" height="14" viewBox="0 0 16 14" fill="#cfcfcf"><path d="M0 0l16 7-16 7 2-7z" /></svg></span>
              </div>
            </div>
          </div>
        </div>
      </div>

      {/* Windows activation watermark */}
      <div className="absolute left-[1073px] top-[650px] pointer-events-none text-[#8d8d8d]/80 [font-family:'Noto_Sans',sans-serif] whitespace-nowrap">
        <div className="text-[19px] leading-[24px]">Activate Windows</div>
        <div className="text-[14.300px] leading-[20px] mt-[1px]">Go to Settings to activate Windows.</div>
      </div>
    </div>
  );
}
